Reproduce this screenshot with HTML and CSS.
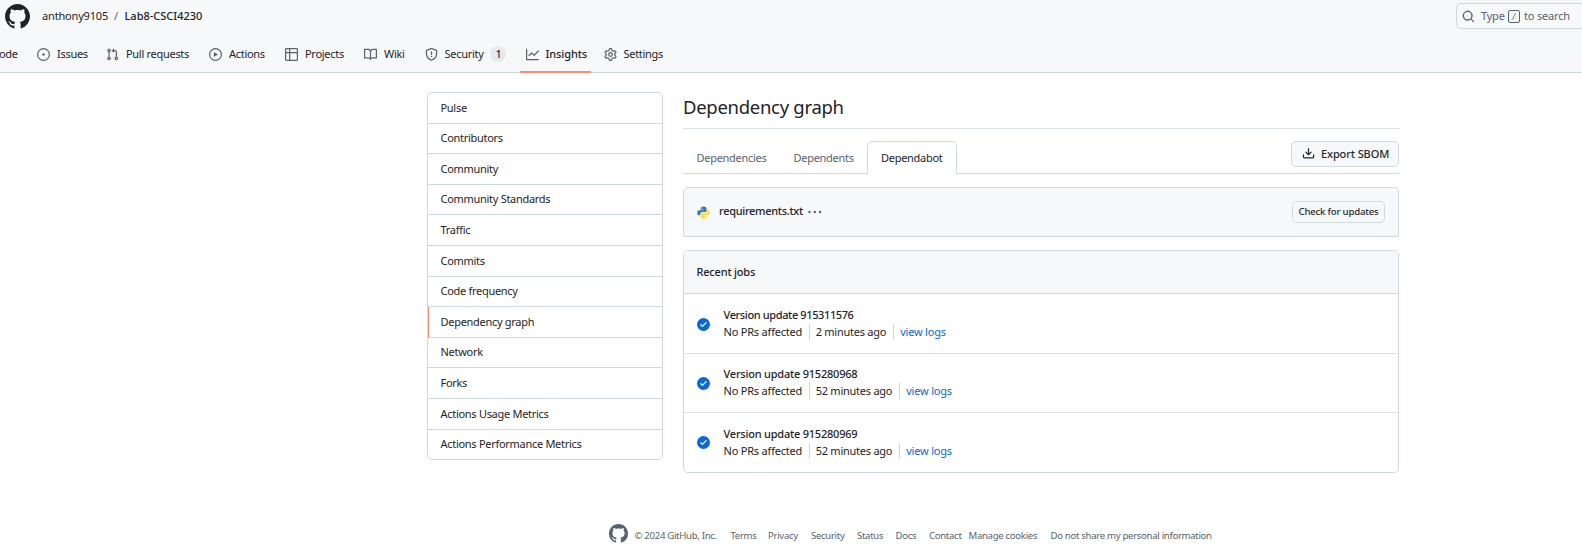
FILE: index.html
```html
<!DOCTYPE html>
<html lang="en">
<head>
<meta charset="utf-8">
<title>Dependency graph</title>
<link rel="stylesheet" href="styles.css">
</head>
<body>
<svg width="0" height="0" class="defs">
  <symbol id="mark" viewBox="0 0 16 16"><path d="M8 0c4.42 0 8 3.58 8 8a8.013 8.013 0 0 1-5.45 7.59c-.4.08-.55-.17-.55-.38 0-.27.01-1.13.01-2.2 0-.75-.25-1.23-.54-1.48 1.78-.2 3.65-.88 3.65-3.95 0-.88-.31-1.59-.82-2.15.08-.2.36-1.02-.08-2.12 0 0-.67-.22-2.2.82-.64-.18-1.32-.27-2-.27-.68 0-1.36.09-2 .27-1.53-1.03-2.2-.82-2.2-.82-.44 1.1-.16 1.92-.08 2.12-.51.56-.82 1.28-.82 2.15 0 3.06 1.86 3.75 3.64 3.95-.23.2-.44.55-.51 1.07-.46.21-1.61.55-2.33-.66-.15-.24-.6-.83-1.23-.82-.67.01-.27.38.01.53.34.19.73.9.82 1.13.16.45.68 1.31 2.69.94 0 .67.01 1.3.01 1.49 0 .21-.15.45-.55.38A7.995 7.995 0 0 1 0 8c0-4.42 3.58-8 8-8Z"/></symbol>
  <symbol id="check" viewBox="0 0 16 16"><path d="M8 16A8 8 0 1 1 8 0a8 8 0 0 1 0 16Zm3.78-9.72a.751.751 0 0 0-.018-1.042.751.751 0 0 0-1.042-.018L6.75 9.19 5.28 7.72a.751.751 0 0 0-1.042.018.751.751 0 0 0-.018 1.042l2 2a.75.75 0 0 0 1.06 0Z"/></symbol>
</svg>
<header class="header">
  <div class="topbar">
    <svg class="logo" viewBox="0 0 16 16"><use href="#mark"/></svg>
    <nav class="crumbs"><span class="owner">anthony9105</span><span class="slash">/</span><span class="repo">Lab8-CSCI4230</span></nav>
    <div class="search">
      <svg class="icon" viewBox="0 0 16 16"><path d="M10.68 11.74a6 6 0 0 1-7.922-8.982 6 6 0 0 1 8.982 7.922l3.04 3.04a.749.749 0 0 1-.326 1.275.749.749 0 0 1-.734-.215ZM11.5 7a4.499 4.499 0 1 0-8.997 0A4.499 4.499 0 0 0 11.5 7Z"/></svg>
      <span class="type">Type</span><span class="key"><svg viewBox="0 0 11 11"><path d="M3.5 9 7.3 2"/></svg></span><span>to search</span>
    </div>
  </div>
  <nav class="nav">
    <a class="code">ode</a>
    <a><svg class="icon" viewBox="0 0 16 16"><path d="M8 9.5a1.5 1.5 0 1 0 0-3 1.5 1.5 0 0 0 0 3Z"/><path d="M8 0a8 8 0 1 1 0 16A8 8 0 0 1 8 0ZM1.5 8a6.5 6.5 0 1 0 13 0 6.5 6.5 0 0 0-13 0Z"/></svg>Issues</a>
    <a><svg class="icon" viewBox="0 0 16 16"><path d="M1.5 3.25a2.25 2.25 0 1 1 3 2.122v5.256a2.251 2.251 0 1 1-1.5 0V5.372A2.25 2.25 0 0 1 1.5 3.25Zm5.677-.177L9.573.677A.25.25 0 0 1 10 .854V2.5h1A2.5 2.5 0 0 1 13.5 5v5.628a2.251 2.251 0 1 1-1.5 0V5a1 1 0 0 0-1-1h-1v1.646a.25.25 0 0 1-.427.177L7.177 3.427a.25.25 0 0 1 0-.354ZM3.75 2.5a.75.75 0 1 0 0 1.5.75.75 0 0 0 0-1.5Zm0 9.5a.75.75 0 1 0 0 1.5.75.75 0 0 0 0-1.5Zm8.25.75a.75.75 0 1 0 1.5 0 .75.75 0 0 0-1.5 0Z"/></svg>Pull requests</a>
    <a><svg class="icon" viewBox="0 0 16 16"><path d="M8 0a8 8 0 1 1 0 16A8 8 0 0 1 8 0ZM1.5 8a6.5 6.5 0 1 0 13 0 6.5 6.5 0 0 0-13 0Zm4.879-2.773 4.264 2.559a.25.25 0 0 1 0 .428l-4.264 2.559A.25.25 0 0 1 6 10.559V5.442a.25.25 0 0 1 .379-.215Z"/></svg>Actions</a>
    <a><svg class="icon" viewBox="0 0 16 16"><path d="M0 1.75C0 .784.784 0 1.75 0h12.5C15.216 0 16 .784 16 1.75v12.5A1.75 1.75 0 0 1 14.25 16H1.75A1.75 1.75 0 0 1 0 14.25ZM6.5 6.5v8h7.75a.25.25 0 0 0 .25-.25V6.5Zm8-1.5V1.75a.25.25 0 0 0-.25-.25H6.5V5Zm-13 1.5v7.75c0 .138.112.25.25.25H5v-8ZM5 5V1.5H1.75a.25.25 0 0 0-.25.25V5Z"/></svg>Projects</a>
    <a><svg class="icon" viewBox="0 0 16 16"><path d="M0 1.75A.75.75 0 0 1 .75 1h4.253c1.227 0 2.317.59 3 1.501A3.743 3.743 0 0 1 11.006 1h4.245a.75.75 0 0 1 .75.75v10.5a.75.75 0 0 1-.75.75h-4.507a2.25 2.25 0 0 0-1.591.659l-.622.621a.75.75 0 0 1-1.06 0l-.622-.621A2.25 2.25 0 0 0 5.258 13H.75a.75.75 0 0 1-.75-.75Zm7.251 10.324.004-5.073-.002-2.253A2.25 2.25 0 0 0 5.003 2.5H1.5v9h3.757a3.75 3.75 0 0 1 1.994.574ZM8.755 4.75l-.004 7.322a3.752 3.752 0 0 1 1.992-.572H14.5v-9h-3.495a2.25 2.25 0 0 0-2.25 2.25Z"/></svg>Wiki</a>
    <a><svg class="icon" viewBox="0 0 16 16"><path d="M7.467.133a1.748 1.748 0 0 1 1.066 0l5.25 1.68A1.75 1.75 0 0 1 15 3.48V7c0 1.566-.32 3.182-1.303 4.682-.983 1.498-2.585 2.813-5.032 3.855a1.697 1.697 0 0 1-1.33 0c-2.447-1.042-4.049-2.357-5.032-3.855C1.32 10.182 1 8.566 1 7V3.48a1.755 1.755 0 0 1 1.217-1.667Zm.61 1.429a.25.25 0 0 0-.153 0l-5.25 1.68a.25.25 0 0 0-.174.238V7c0 1.358.275 2.666 1.057 3.86.784 1.194 2.121 2.34 4.366 3.297a.196.196 0 0 0 .154 0c2.245-.956 3.582-2.104 4.366-3.298C13.225 9.666 13.5 8.36 13.5 7V3.48a.251.251 0 0 0-.174-.237l-5.25-1.68ZM8.75 4.75v3a.75.75 0 0 1-1.5 0v-3a.75.75 0 0 1 1.5 0ZM9 10.5a1 1 0 1 1-2 0 1 1 0 0 1 2 0Z"/></svg>Security<span class="count">1</span></a>
    <a class="current"><svg class="icon" viewBox="0 0 16 16"><path d="M1.5 1.75V13.5h13.75a.75.75 0 0 1 0 1.5H.75a.75.75 0 0 1-.75-.75V1.75a.75.75 0 0 1 1.5 0Zm14.28 2.53-5.25 5.25a.75.75 0 0 1-1.06 0L7 7.06 4.28 9.78a.751.751 0 0 1-1.042-.018.751.751 0 0 1-.018-1.042l3.25-3.25a.75.75 0 0 1 1.06 0L10 7.94l4.72-4.72a.751.751 0 0 1 1.042.018.751.751 0 0 1 .018 1.042Z"/></svg>Insights</a>
    <a><svg class="icon" viewBox="0 0 16 16"><path d="M8 0a8.2 8.2 0 0 1 .701.031C9.444.095 9.99.645 10.16 1.29l.288 1.107c.018.066.079.158.212.224.231.114.454.243.668.386.123.082.233.09.299.071l1.103-.303c.644-.176 1.392.021 1.82.63.27.385.506.792.704 1.218.315.675.111 1.422-.364 1.891l-.814.806c-.049.048-.098.147-.088.294.016.257.016.515 0 .772-.01.147.038.246.088.294l.814.806c.475.469.679 1.216.364 1.891a7.977 7.977 0 0 1-.704 1.217c-.428.61-1.176.807-1.82.63l-1.102-.302c-.067-.019-.177-.011-.3.071a5.909 5.909 0 0 1-.668.386c-.133.066-.194.158-.211.224l-.29 1.106c-.168.646-.715 1.196-1.458 1.26a8.006 8.006 0 0 1-1.402 0c-.743-.064-1.289-.614-1.458-1.26l-.289-1.106c-.018-.066-.079-.158-.212-.224a5.738 5.738 0 0 1-.668-.386c-.123-.082-.233-.09-.299-.071l-1.103.303c-.644.176-1.392-.021-1.82-.63a8.12 8.12 0 0 1-.704-1.218c-.315-.675-.111-1.422.363-1.891l.815-.806c.05-.048.098-.147.088-.294a6.214 6.214 0 0 1 0-.772c.01-.147-.038-.246-.088-.294l-.815-.806C.635 6.045.431 5.298.746 4.623a7.92 7.92 0 0 1 .704-1.217c.428-.61 1.176-.807 1.82-.63l1.102.302c.067.019.177.011.3-.071.214-.143.437-.272.668-.386.133-.066.194-.158.211-.224l.29-1.106C6.009.645 6.556.095 7.299.03 7.53.01 7.764 0 8 0Zm-.571 1.525c-.036.003-.108.036-.137.146l-.289 1.105c-.147.561-.549.967-.998 1.189-.173.086-.34.183-.5.29-.417.278-.97.423-1.529.27l-1.103-.303c-.109-.03-.175.016-.195.045-.22.312-.412.644-.573.99-.014.031-.021.11.059.19l.815.806c.411.406.562.957.53 1.456a4.709 4.709 0 0 0 0 .582c.032.499-.119 1.05-.53 1.456l-.815.806c-.081.08-.073.159-.059.19.162.346.353.677.573.989.02.03.085.076.195.046l1.102-.303c.56-.153 1.113-.008 1.53.27.161.107.328.204.501.29.447.222.85.629.997 1.189l.289 1.105c.029.109.101.143.137.146a6.6 6.6 0 0 0 1.142 0c.036-.003.108-.036.137-.146l.289-1.105c.147-.561.549-.967.998-1.189.173-.086.34-.183.5-.29.417-.278.97-.423 1.529-.27l1.103.303c.109.029.175-.016.195-.045.22-.313.411-.644.573-.99.014-.031.021-.11-.059-.19l-.815-.806c-.411-.406-.562-.957-.53-1.456a4.709 4.709 0 0 0 0-.582c-.032-.499.119-1.05.53-1.456l.815-.806c.081-.08.073-.159.059-.19a6.464 6.464 0 0 0-.573-.989c-.02-.03-.085-.076-.195-.046l-1.102.303c-.56.153-1.113.008-1.53-.27a4.44 4.44 0 0 0-.501-.29c-.447-.222-.85-.629-.997-1.189l-.289-1.105c-.029-.11-.101-.143-.137-.146a6.6 6.6 0 0 0-1.142 0ZM11 8a3 3 0 1 1-6 0 3 3 0 0 1 6 0ZM9.5 8a1.5 1.5 0 1 0-3.001.001A1.5 1.5 0 0 0 9.5 8Z"/></svg>Settings</a>
  </nav>
</header>
<div class="layout">
  <nav class="menu">
    <a>Pulse</a><a>Contributors</a><a>Community</a><a>Community Standards</a><a>Traffic</a><a>Commits</a><a>Code frequency</a><a class="selected">Dependency graph</a><a>Network</a><a>Forks</a><a>Actions Usage Metrics</a><a>Actions Performance Metrics</a>
  </nav>
  <main class="main">
    <h2>Dependency graph</h2>
    <div class="tabs">
      <a class="tab t1">Dependencies</a><a class="tab t2">Dependents</a><a class="tab active">Dependabot</a>
      <button class="export"><svg class="icon" viewBox="0 0 16 16"><path d="M2.75 14A1.75 1.75 0 0 1 1 12.25v-2.5a.75.75 0 0 1 1.5 0v2.5c0 .138.112.25.25.25h10.5a.25.25 0 0 0 .25-.25v-2.5a.75.75 0 0 1 1.5 0v2.5A1.75 1.75 0 0 1 13.25 14Z"/><path d="M7.25 7.689V2a.75.75 0 0 1 1.5 0v5.689l1.97-1.969a.749.749 0 1 1 1.06 1.06l-3.25 3.25a.749.749 0 0 1-1.06 0L4.22 6.78a.749.749 0 1 1 1.06-1.06l1.97 1.969Z"/></svg><span>Export SBOM</span></button>
    </div>
    <section class="manifest">
      <svg class="python" viewBox="0 0 16 16"><path fill="#3776ab" d="M7.9.5C5.4.5 4.5 1.5 4.500 2.900V4.500H8.200V5.100H2.900C1.300 5.100.300 6.200.300 8.200S1.200 11.500 2.700 11.500H4V9.800C4 8.500 5.100 7.500 6.400 7.500H9.700C10.900 7.500 11.700 6.600 11.700 5.500V2.900C11.700 1.500 10.400.500 7.900.500Z"/><circle cx="6.200" cy="2.500" r=".7" fill="#f6f8fa"/><path fill="#ffdc41" d="M8.200 15.700C10.700 15.700 11.600 14.700 11.600 13.300V11.700H7.900V11.100H13.200C14.800 11.100 15.800 10 15.800 8S14.900 4.700 13.400 4.700H12.500V6.100C12.500 7.400 11.300 8.400 10 8.400H6.600C5.400 8.400 4.500 9.300 4.500 10.500V13.300C4.500 14.700 5.700 15.700 8.200 15.700Z"/><circle cx="9.900" cy="13.700" r=".7" fill="#f6f8fa"/></svg>
      <span class="file">requirements.txt</span>
      <svg class="dots" viewBox="0 0 14 4"><circle cx="1.500" cy="2" r="1.200"/><circle cx="6.800" cy="2" r="1.200"/><circle cx="12.100" cy="2" r="1.200"/></svg>
      <button class="updates">Check for updates</button>
    </section>
    <section class="jobs">
      <h3>Recent jobs</h3>
      <div class="job first"><svg class="ok" viewBox="0 0 16 16"><use href="#check"/></svg><div><b>Version update 915311576</b><p><span>No PRs affected</span><span>2 minutes ago</span><a>view logs</a></p></div></div>
      <div class="job"><svg class="ok" viewBox="0 0 16 16"><use href="#check"/></svg><div><b>Version update 915280968</b><p><span>No PRs affected</span><span>52 minutes ago</span><a>view logs</a></p></div></div>
      <div class="job"><svg class="ok" viewBox="0 0 16 16"><use href="#check"/></svg><div><b>Version update 915280969</b><p><span>No PRs affected</span><span>52 minutes ago</span><a>view logs</a></p></div></div>
    </section>
  </main>
</div>
<footer class="footer">
  <svg viewBox="0 0 16 16"><use href="#mark"/></svg>
  <span>© 2024 GitHub, Inc.</span><a>Terms</a><a>Privacy</a><a>Security</a><a>Status</a><a>Docs</a><a>Contact</a><a>Manage cookies</a><a>Do not share my personal information</a>
</footer>
</body>
</html>
```
FILE: styles.css
```css
* { box-sizing: border-box; }
body {
  margin: 0;
  height: 557px;
  overflow: hidden;
  background: #fff;
  color: #1f2328;
  font: 11px/16px "Noto Sans", "Open Sans", sans-serif;
  letter-spacing: -0.290px;
  white-space: nowrap;
}
.defs { display: block; height: 0; }
.icon { width: 13px; height: 13px; flex: none; fill: #59636e; }

.header { height: 73px; background: #f6f8fa; border-bottom: 1px solid #d1d9e0; }
.topbar { display: flex; height: 36px; padding-left: 5px; letter-spacing: -0.1px; }
.logo { width: 25px; height: 25px; margin-top: 4px; fill: #1f2328; }
.crumbs { display: flex; margin: 8px 0 0 12px; }
.owner { width: 72px; letter-spacing: -0.170px; }
.slash { width: 10.500px; color: #59636e; }
.repo { font-weight: 500; letter-spacing: 0; }
.search {
  display: flex;
  align-items: center;
  width: 126px;
  height: 26px;
  margin: 3px 0 0 auto;
  padding-left: 5px;
  border: 1px solid #d1d9e0;
  border-right: 0;
  border-radius: 5px 0 0 5px;
  color: #59636e;
}
.type { width: 26px; margin-left: 6px; letter-spacing: -0.2px; }
.key { flex: none; width: 12px; height: 13px; margin: 0 4px 0 1px; border: 1px solid #59636e; border-radius: 2px; }
.key svg { display: block; width: 10px; height: 11px; fill: none; stroke: #59636e; stroke-width: .9; }
.key + span { letter-spacing: -0.180px; }
.nav {
  display: grid;
  grid-template-columns: 37px 69px 103px 76px 79px 60.500px 95.500px 83.500px 80px;
  height: 37px;
}
.nav a { position: relative; display: flex; align-items: center; gap: 7px; height: 36px; }
.nav .code { justify-content: flex-end; padding-right: 19.500px; letter-spacing: -0.4px; }
.count { width: 16px; height: 16px; border-radius: 8px; background: #e6eaef; font-size: 10px; font-weight: 500; text-align: center; }
.current { font-weight: 500; }
.current::after { content: ""; position: absolute; left: 0; top: 35px; width: 71px; height: 2px; background: #fd8c73; }
.nav .current { padding-left: 5.500px; letter-spacing: -0.1px; }

.layout { display: grid; grid-template-columns: 236px 716px; gap: 20px; margin: 19px 0 0 427px; }
.menu { height: 368px; border: 1px solid #d1d9e0; border-radius: 5px; }
.menu a { display: block; height: 30.600px; padding: 6.700px 0 0 12.500px; border-bottom: 1px solid #d1d9e0; }
.menu a:last-child { border-bottom: 0; }
.menu .selected { border-left: 1px solid #fd8c73; padding-left: 11.500px; }
h2 { height: 37px; margin: 0; padding-top: 2px; border-bottom: 1px solid #dde3e9; font-size: 18.500px; line-height: 26px; font-weight: 400; letter-spacing: -0.290px; }
.tabs { display: flex; height: 33px; margin-top: 12px; border-bottom: 1px solid #d1d9e0; }
.tab { padding: 9px 0 0 13.500px; color: #59636e; }
.t1 { width: 97px; }
.t2 { width: 87px; }
.active { width: 90px; height: 33px; padding: 8px 0 0 13px; border: 1px solid #d1d9e0; border-bottom: 0; border-radius: 5px 5px 0 0; background: #fff; color: #1f2328; }
button { margin: 0; padding: 0; border: 1px solid #d1d9e0; border-radius: 5px; background: #f6f8fa; color: #25292e; font-family: inherit; font-weight: 500; letter-spacing: -0.1px; }
.export { display: flex; align-items: center; gap: 6px; width: 108px; height: 26px; margin-left: auto; padding: 0 0 1px 10px; font-size: 11px; line-height: 15px; }
.export .icon { fill: #25292e; }
.manifest { display: flex; align-items: center; height: 50px; margin-top: 13px; padding: 0 13px; border: 1px solid #d1d9e0; border-radius: 5px 5px 2px 2px; background: #f6f8fa; }
.python { width: 13px; height: 13px; }
.file { width: 89px; margin: 0 0 2px 9px; font-weight: 500; letter-spacing: -0.3px; }
.dots { width: 14px; height: 4px; fill: #59636e; }
.updates { width: 93px; height: 22px; margin: 0 0 1px auto; font-size: 9.600px; line-height: 14px; letter-spacing: -0.2px; }
.jobs { height: 223px; margin-top: 13px; border: 1px solid #d1d9e0; border-radius: 5px; }
h3 { height: 43px; margin: 0; padding: 13px 12.500px; background: #f6f8fa; border-bottom: 1px solid #d1d9e0; border-radius: 4px 4px 0 0; font-size: 11px; line-height: 16px; font-weight: 500; letter-spacing: -0.2px; }
.job { display: flex; align-items: center; height: 59px; padding-left: 13px; border-bottom: 1px solid #dde3e9; }
.job > div { margin-bottom: 1.500px; }
.first { height: 60px; }
.first .ok { margin-top: 1px; }
.job:last-child { border-bottom: 0; }
.ok { width: 13px; height: 13px; margin-right: 13.500px; fill: #0969da; }
.job b { display: block; font-weight: 500; line-height: 18px; letter-spacing: -0.220px; }
.first b { letter-spacing: -0.380px; }
.job p { display: flex; margin: 0; line-height: 16px; letter-spacing: -0.2px; }
.job p span { margin-right: 6px; padding-right: 6.500px; border-right: 1px solid #d1d9e0; }
.job p span + span { margin-right: 6.500px; letter-spacing: -0.250px; }
.job a { color: #0969da; }

.footer { display: grid; grid-template-columns: 25.500px 96px 37.500px 43px 46px 38.500px 33.500px 39.500px 82px 170px; align-items: center; height: 20px; margin: 51px 0 0 609px; color: #59636e; font-size: 9.600px; letter-spacing: -0.310px; }
.footer svg { width: 19px; height: 19px; margin-bottom: 1px; fill: #59636e; }
.footer span, .footer a { padding-top: 3px; }
```
